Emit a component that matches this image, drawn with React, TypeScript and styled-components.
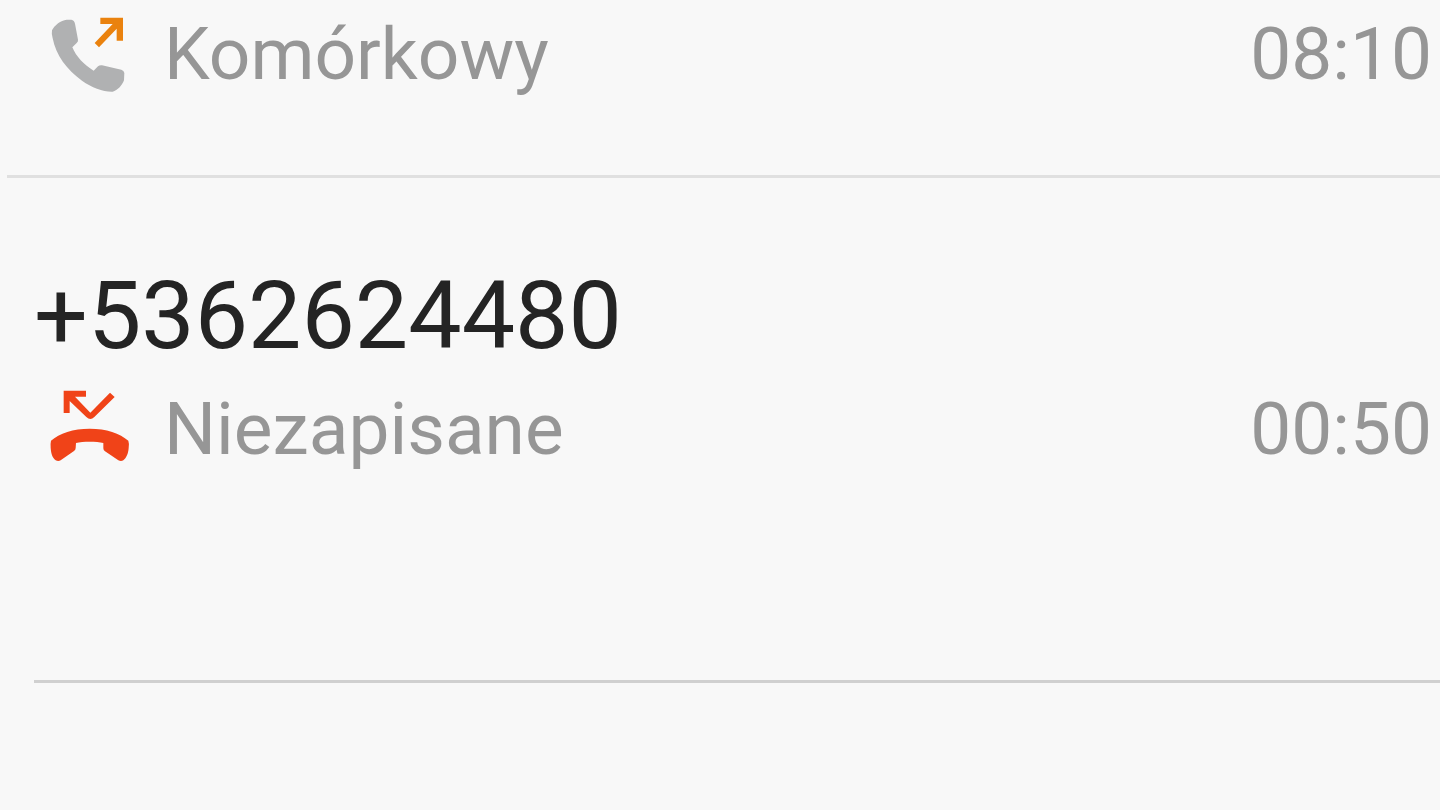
import React from "react";
import styled, { createGlobalStyle } from "styled-components";

const GlobalStyle = createGlobalStyle`
  body {
    margin: 0;
    background: #f8f8f8;
    font-family: Roboto, "Noto Sans", sans-serif;
    overflow: hidden;
  }
`;

const CallList = styled.ul`
  margin: 0;
  padding: 0;
  list-style: none;
`;

const CallItem = styled.li<{ $top: number; $bottom: number }>`
  padding: ${(p) => p.$top}px 8px ${(p) => p.$bottom}px 34px;
`;

const Divider = styled.li<{ $inset: number; $color: string }>`
  height: 3px;
  margin-left: ${(p) => p.$inset}px;
  background: ${(p) => p.$color};
`;

const PhoneNumber = styled.h2`
  margin: 0 0 14px;
  font-size: 95px;
  font-weight: 400;
  line-height: 112px;
  color: #242424;
`;

const Details = styled.div`
  display: flex;
  align-items: center;
  padding-left: 6px;
  font-size: 73px;
  line-height: 86px;
  color: #969696;
`;

const CallIcon = styled.svg`
  flex: none;
  width: 100px;
  height: 86px;
  margin-right: 24px;
`;

const Label = styled.span`
  flex: 1;
`;

const Time = styled.time`
  flex: none;
`;

const OutgoingIcon = () => (
  <CallIcon viewBox="0 18 300 258" role="img" aria-label="Połączenie wychodzące">
    <path
      fill="#b0b1b2"
      d="M36 76C44 60 62 46 80 44L94 44Q103 46 105 56L114 104Q115 110 110 114L97 127C108 154 132 180 161 197L174 184Q179 180 186 181L244 194Q252 196 253 204L252 226C246 242 233 256 218 260C190 261 156 248 126 227C80 194 48 151 38 100Q34 86 36 76Z"
    />
    <path fill="#ea820e" d="M181 38H249V107H230V71L177 127L164 114L218 57H181Z" />
  </CallIcon>
);

const MissedIcon = () => (
  <CallIcon viewBox="0 18 300 258" role="img" aria-label="Połączenie nieodebrane">
    <path
      fill="#f04318"
      d="M71 32H138V50H105L151 98L210 38L224 51L163 111Q151 123 139 111L89 63V99H71Z"
    />
    <path
      fill="#f04318"
      d="M33 182C58 160 100 146 149 146C199 146 240 160 265 182Q268 190 266 204C265 220 259 234 250 241Q243 245 235 241L195 214Q190 211 190 205V189C170 184 128 184 108 189L107 204Q107 210 102 213L62 241Q55 245 47 241C37 234 33 219 32 204Q31 190 33 182Z"
    />
  </CallIcon>
);

export default function App() {
  return (
    <>
      <GlobalStyle />
      <main>
        <CallList>
          <CallItem $top={11} $bottom={78}>
            <Details>
              <OutgoingIcon />
              <Label>Komórkowy</Label>
              <Time dateTime="08:10">08:10</Time>
            </Details>
          </CallItem>
          <Divider role="separator" $inset={7} $color="#e0e0e0" />
          <CallItem $top={82} $bottom={208}>
            <PhoneNumber>+5362624480</PhoneNumber>
            <Details>
              <MissedIcon />
              <Label>Niezapisane</Label>
              <Time dateTime="00:50">00:50</Time>
            </Details>
          </CallItem>
          <Divider role="separator" $inset={34} $color="#d0d0d0" />
        </CallList>
      </main>
    </>
  );
}
